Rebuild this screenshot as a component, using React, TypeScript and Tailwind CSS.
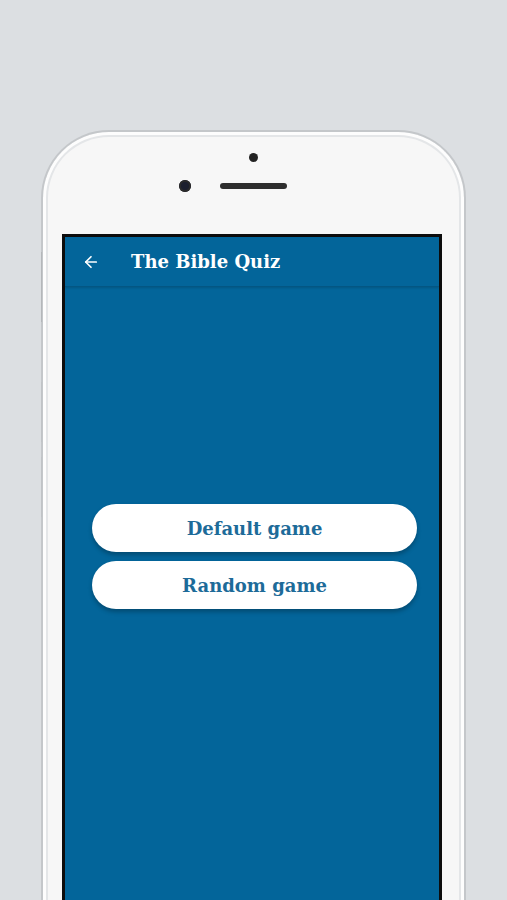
import { ArrowLeft } from 'lucide-react'

const serif = { fontFamily: '"DejaVu Serif", "Liberation Serif", serif' }

function GameButton({ label }: { label: string }) {
  return (
    <button
      className="h-[48px] w-full rounded-full bg-white text-[#1d6b99] text-[18px] font-bold shadow-[0_3px_4px_rgba(0,0,0,0.25)]"
      style={serif}
    >
      {label}
    </button>
  )
}

export default function App() {
  return (
    <div className="h-[900px] w-full overflow-hidden bg-[#dcdfe2] pt-[130px] pl-[41px] pr-[41px]">
      <div className="relative h-[800px] rounded-t-[68px] border-[2px] border-b-0 border-[#c4c7ca] bg-[#f7f7f7] shadow-[inset_0_0_0_3px_#fdfdfd,inset_0_0_0_5px_#e4e6e8]">
        {/* volume buttons */}
        <div className="absolute -left-[2px] top-[120px] h-[70px] w-[1px] bg-[#b4b7ba]" />
        <div className="absolute -left-[2px] top-[250px] h-[60px] w-[1px] bg-[#c0c3c6]" />
        <div className="absolute -left-[2px] top-[325px] h-[60px] w-[1px] bg-[#c0c3c6]" />

        <div className="flex flex-col items-center pt-[21px]">
          <div className="h-[9px] w-[9px] rounded-full bg-[#222]" />
          <div className="mt-[18px] grid w-full grid-cols-[1fr_auto_1fr] items-center">
            <div className="flex justify-end pr-[29px]">
              <div className="h-[12px] w-[12px] rounded-full bg-[#1c1f2e] shadow-[inset_0_0_0_2px_#2a2a2a]" />
            </div>
            <div className="h-[6px] w-[67px] rounded-full bg-[#2e2e2e]" />
            <div />
          </div>
        </div>

        <div className="ml-[19px] mr-[22px] mt-[42px] h-[700px] border-[3px] border-b-0 border-[#0d0d0d] bg-[#03659a]">
          <div className="flex h-[50px] items-center border-b border-[#035683] shadow-[0_1px_2px_rgba(0,0,0,0.15)]">
            <ArrowLeft className="ml-[17px] text-white" size={18} strokeWidth={2.25} />
            <span className="ml-[31px] text-[18px] font-bold text-white" style={serif}>
              The Bible Quiz
            </span>
          </div>
          <div className="flex flex-col gap-[9px] pl-[27px] pr-[22px] pt-[217px]">
            <GameButton label="Default game" />
            <GameButton label="Random game" />
          </div>
        </div>
      </div>
    </div>
  )
}
